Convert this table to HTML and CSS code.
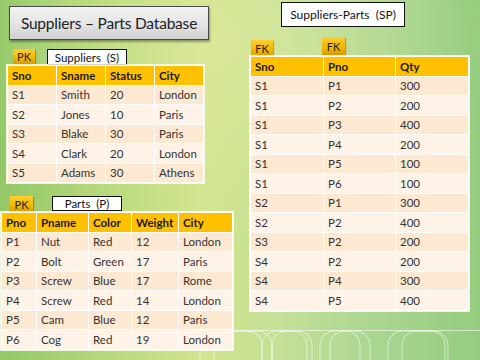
FILE: index.html
```html
<!DOCTYPE html>
<html>
<head>
<meta charset="utf-8">
<link rel="stylesheet" href="styles.css">
</head>
<body>
<div class="slide">
  <svg class="deco" width="480" height="360" viewBox="0 0 480 360">
    <g fill="none" stroke="#ffffff" stroke-opacity="0.7" stroke-width="0.8">
      <line x1="0" y1="330.5" x2="480" y2="330.5"/>
      <rect x="200" y="331" width="62" height="60" rx="14"/>
      <rect x="214" y="331" width="58" height="60" rx="14"/>
      <rect x="262" y="331" width="45" height="60" rx="14"/>
      <rect x="272" y="331" width="40" height="60" rx="14"/>
      <rect x="320" y="331" width="40" height="60" rx="14"/>
      <rect x="330" y="331" width="40" height="60" rx="14"/>
      <rect x="388" y="331" width="57" height="60" rx="14"/>
      <rect x="402" y="331" width="46" height="60" rx="14"/>
    </g>
  </svg>

  <div class="col-left">
    <div class="title">Suppliers – Parts Database</div>

    <div class="tags tags-s">
      <span class="badge badge-s">PK</span>
      <span class="label label-s">Suppliers&nbsp; (S)</span>
    </div>
    <table class="t t-s">
      <colgroup><col class="w49"><col class="w49"><col class="w49"><col class="w49"></colgroup>
      <tr class="hd"><td>Sno</td><td>Sname</td><td>Status</td><td>City</td></tr>
      <tr><td>S1</td><td>Smith</td><td>20</td><td>London</td></tr>
      <tr><td>S2</td><td>Jones</td><td>10</td><td>Paris</td></tr>
      <tr><td>S3</td><td>Blake</td><td>30</td><td>Paris</td></tr>
      <tr><td>S4</td><td>Clark</td><td>20</td><td>London</td></tr>
      <tr><td>S5</td><td>Adams</td><td>30</td><td>Athens</td></tr>
    </table>

    <div class="tags tags-p">
      <span class="badge badge-p">PK</span>
      <span class="label label-p">Parts&nbsp; (P)</span>
    </div>
    <table class="t t-p">
      <colgroup><col class="w35"><col class="w52"><col class="w43"><col class="w47"><col class="w54"></colgroup>
      <tr class="hd"><td>Pno</td><td>Pname</td><td>Color</td><td>Weight</td><td>City</td></tr>
      <tr><td>P1</td><td>Nut</td><td>Red</td><td>12</td><td>London</td></tr>
      <tr><td>P2</td><td>Bolt</td><td>Green</td><td>17</td><td>Paris</td></tr>
      <tr><td>P3</td><td>Screw</td><td>Blue</td><td>17</td><td>Rome</td></tr>
      <tr><td>P4</td><td>Screw</td><td>Red</td><td>14</td><td>London</td></tr>
      <tr><td>P5</td><td>Cam</td><td>Blue</td><td>12</td><td>Paris</td></tr>
      <tr><td>P6</td><td>Cog</td><td>Red</td><td>19</td><td>London</td></tr>
    </table>
  </div>

  <div class="col-right">
    <div class="label label-sp">Suppliers-Parts&nbsp; (SP)</div>
    <div class="tags tags-sp">
      <span class="badge fk1">FK</span>
      <span class="badge fk2">FK</span>
    </div>
    <table class="t t-sp">
      <colgroup><col class="w73"><col class="w72"><col class="w73"></colgroup>
      <tr class="hd"><td>Sno</td><td>Pno</td><td>Qty</td></tr>
      <tr><td>S1</td><td>P1</td><td>300</td></tr>
      <tr><td>S1</td><td>P2</td><td>200</td></tr>
      <tr><td>S1</td><td>P3</td><td>400</td></tr>
      <tr><td>S1</td><td>P4</td><td>200</td></tr>
      <tr><td>S1</td><td>P5</td><td>100</td></tr>
      <tr><td>S1</td><td>P6</td><td>100</td></tr>
      <tr><td>S2</td><td>P1</td><td>300</td></tr>
      <tr><td>S2</td><td>P2</td><td>400</td></tr>
      <tr><td>S3</td><td>P2</td><td>200</td></tr>
      <tr><td>S4</td><td>P2</td><td>200</td></tr>
      <tr><td>S4</td><td>P4</td><td>300</td></tr>
      <tr><td>S4</td><td>P5</td><td>400</td></tr>
    </table>
  </div>
</div>
</body>
</html>
```

FILE: styles.css
```css
* { box-sizing: border-box; }
html, body { margin: 0; padding: 0; }
body {
  font-family: Lato, "Open Sans", sans-serif;
  color: #222;
}
.slide {
  position: relative;
  width: 480px;
  height: 360px;
  overflow: hidden;
  display: flex;
  background:
    radial-gradient(ellipse 260px 200px at 230px 40px, rgba(225, 235, 160, 0.55), rgba(225, 235, 160, 0) 100%),
    linear-gradient(90deg, #93c868 0%, #b6d87a 22%, #d2e48e 42%, #c3df97 60%, #a8d590 80%, #94cc7e 100%);
}
.deco {
  position: absolute;
  left: 0;
  top: 0;
  z-index: 0;
}
.col-left, .col-right {
  position: relative;
  z-index: 1;
  display: flex;
  flex-direction: column;
  align-items: flex-start;
}
.col-left { width: 250px; flex: none; }
.col-right { flex: none; }

.title {
  margin: 6px 0 0 9px;
  width: 200px;
  height: 34px;
  border: 1px solid #4a4a4a;
  background: linear-gradient(180deg, #f4f4f4 0%, #e4e4e4 55%, #cfcfcf 100%);
  box-shadow: 1px 2px 2px rgba(0, 0, 0, 0.35);
  font-size: 15.5px;
  line-height: 32px;
  text-align: center;
  color: #222;
  white-space: nowrap;
  letter-spacing: -0.2px;
}

.tags { display: flex; align-items: flex-start; }
.tags-s { margin-top: 9px; height: 16px; }
.tags-p { margin-top: 13px; height: 16px; }
.tags-sp { margin-top: 10px; height: 19px; }

.badge {
  display: flex;
  align-items: center;
  justify-content: center;
  font-size: 11px;
  color: #222;
  background: linear-gradient(180deg, #ffcf33 0%, #f5b800 55%, #d99a00 100%);
  box-shadow: 1px 1px 1px rgba(0, 0, 0, 0.25);
}
.badge-s { margin-left: 13px; width: 22px; height: 15px; }
.badge-p { margin-left: 10px; width: 23px; height: 16px; }
.fk1 { margin-left: 1px; margin-top: 3px; width: 22px; height: 17px; }
.fk2 { margin-left: 49px; width: 23px; height: 18px; }

.label {
  display: flex;
  align-items: center;
  justify-content: center;
  background: #fff;
  border: 1.5px solid #111;
  font-size: 11.5px;
  color: #111;
  white-space: nowrap;
}
.label-s { margin-left: 12px; width: 80px; height: 16px; }
.label-p { margin-left: 19px; width: 70px; height: 15px; }
.label-sp { margin: 2px 0 0 31px; width: 124px; height: 25px; font-size: 12px; }

.t {
  border-collapse: collapse;
  table-layout: fixed;
  font-size: 11.5px;
  color: #333;
  outline: 1px solid rgba(255, 255, 255, 0.8);
}
.t td {
  border: 1px solid #ffffff;
  padding: 0 0 0 4px;
  height: 19.5px;
  line-height: 1;
  white-space: nowrap;
  overflow: hidden;
}
.t tr { background: #fde8d2; }
.t tr:nth-child(odd) { background: #fff3e8; }
.t tr.hd { background: #ffc000; }
.t tr.hd td { font-weight: bold; color: #1a1a1a; }

.t-s { margin-left: 7px; width: 196px; }
.t-p { margin: 0 0 0 1px; width: 231px; }
.t-sp { width: 218px; }

.w49 { width: 49px; }
.w35 { width: 35px; }
.w52 { width: 52px; }
.w43 { width: 43px; }
.w47 { width: 47px; }
.w54 { width: 54px; }
.w73 { width: 73px; }
.w72 { width: 72px; }
```
